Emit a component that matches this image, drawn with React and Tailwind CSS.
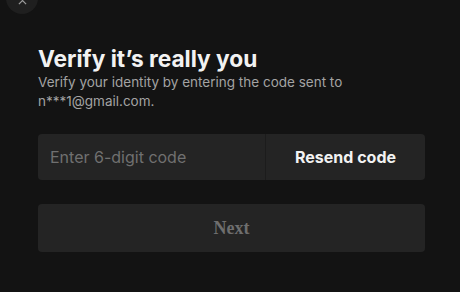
export default function App() {
  return (
    <div
      className="relative h-[292px] w-[460px] overflow-hidden bg-[#131313] text-white"
      style={{ fontFamily: "Inter, sans-serif" }}
    >
      <button className="absolute -top-[18px] left-[6px] flex h-8 w-8 items-end justify-center rounded-full bg-[#1f1f1f] pb-[9px] text-[#9a9a9a]">
        <svg width="9" height="9" viewBox="0 0 10 10" fill="none" stroke="currentColor" strokeWidth="1.4">
          <path d="M1 1l8 8M9 1l-8 8" />
        </svg>
      </button>
      <div className="pl-[38px] pr-[35px] pt-[44px]">
        <h1 className="text-[22.7px] font-bold leading-[30px] text-[#f2f2f2]">
          Verify it’s really you
        </h1>
        <p className="-mt-[1px] text-[13.5px] leading-[19px] text-[#a3a3a3]">
          Verify your identity by entering the code sent to
          <br />
          n***1@gmail.com.
        </p>
        <div className="mt-[23px] flex h-[46px] overflow-hidden rounded-[4px] bg-[#242424]">
          <input
            className="min-w-0 flex-1 bg-transparent px-[12px] text-[16px] text-white outline-none placeholder:text-[#707070]"
            placeholder="Enter 6-digit code"
          />
          <div className="w-px bg-[#1c1c1c]" />
          <button className="w-[159px] text-[16px] font-bold text-[#f2f2f2]">Resend code</button>
        </div>
        <button
          className="mt-[24px] flex h-[48px] w-full items-center justify-center rounded-[4px] bg-[#242424] text-[18px] font-bold text-[#6e6e6e]"
          style={{ fontFamily: "'Liberation Serif', serif" }}
        >
          Next
        </button>
      </div>
    </div>
  );
}
